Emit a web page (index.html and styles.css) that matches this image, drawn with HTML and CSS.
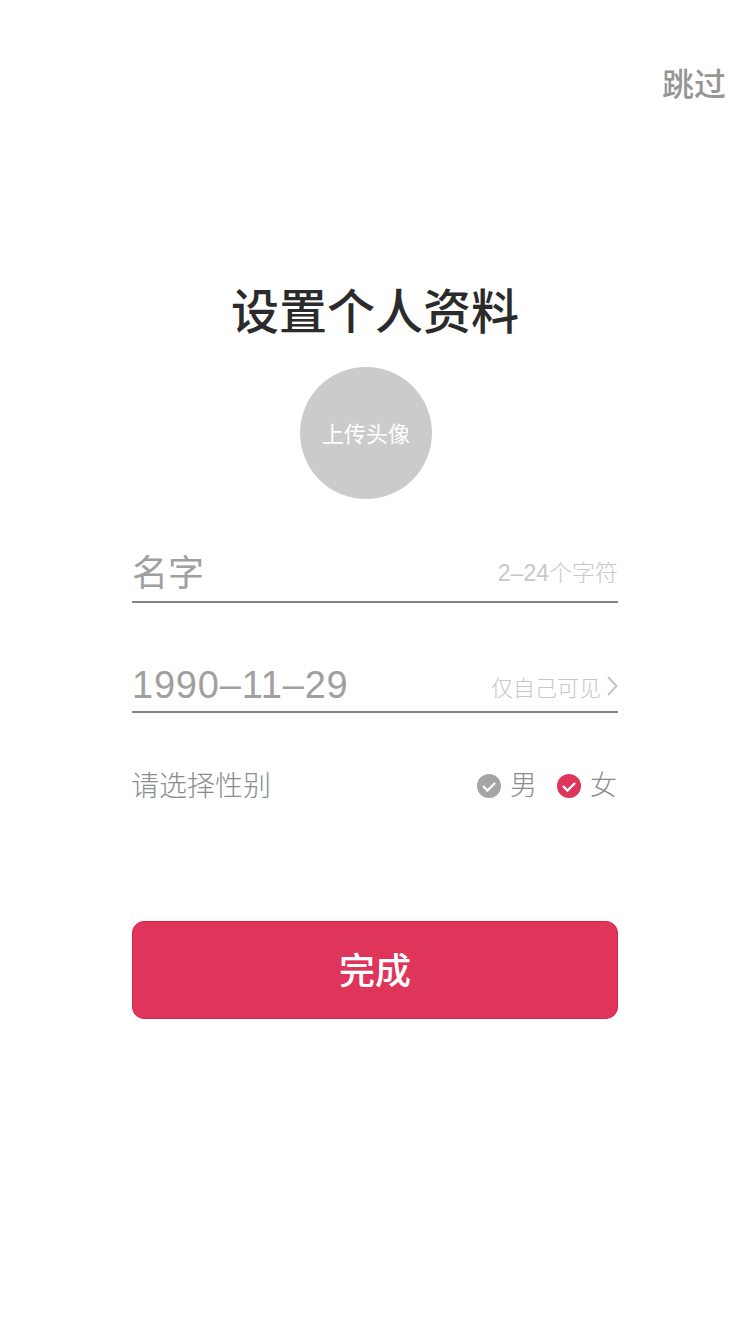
FILE: index.html
```html
<!DOCTYPE html>
<html lang="zh-CN">
<head>
  <meta charset="UTF-8">
  <meta name="viewport" content="width=device-width, initial-scale=1.0">
  <title>设置个人资料</title>
  <link rel="stylesheet" href="styles.css">
</head>
<body>

<div class="topbar">
  <a class="skip">跳过</a>
</div>

<div class="profile-form">
  <h1>设置个人资料</h1>

  <div class="avatar-row">
    <div class="avatar">上传头像</div>
  </div>

  <div class="field field-name">
    <span class="field-value">名字</span>
    <span class="field-hint">2–24个字符</span>
  </div>

  <div class="field field-date">
    <span class="field-value">1990–11–29</span>
    <span class="field-hint">仅自己可见
      <svg class="chevron" width="11" height="22" viewBox="0 0 11 22"><path d="M1 2 L9.5 11 L1 20" fill="none" stroke="#c4c4c4" stroke-width="2"/></svg>
    </span>
  </div>

  <div class="gender-row">
    <span class="gender-label">请选择性别</span>
    <div class="gender-options">
      <span class="gender-option">
        <svg width="24" height="24" viewBox="0 0 24 24"><circle cx="12" cy="12" r="12" fill="#a5a5a5"/><path d="M6 12 L10.5 16.5 L18 9" fill="none" stroke="#fff" stroke-width="2.4"/></svg>
        <span class="gender-text">男</span>
      </span>
      <span class="gender-option">
        <svg width="24" height="24" viewBox="0 0 24 24"><circle cx="12" cy="12" r="12" fill="#e0355b"/><path d="M6 12 L10.5 16.5 L18 9" fill="none" stroke="#fff" stroke-width="2.4"/></svg>
        <span class="gender-text">女</span>
      </span>
    </div>
  </div>

  <button class="done-btn">完成</button>
</div>

</body>
</html>
```
FILE: styles.css
```css
body {
  font-family: "Liberation Sans", "Noto Sans CJK SC", sans-serif;
  background-color: #fff;
  margin: 0;
  padding: 0;
  height: 1334px;
  overflow: hidden;
}

.topbar {
  display: flex;
  justify-content: flex-end;
  padding: 66px 24px 0 0;
  height: 38px;
}

.skip {
  font-size: 32px;
  line-height: 38px;
  color: #969696;
  font-weight: 500;
}

.profile-form {
  width: 486px;
  margin: 0 0 0 132px;
  padding-top: 178px;
}

h1 {
  margin: 0;
  width: 486px;
  text-align: center;
  font-size: 48px;
  line-height: 62px;
  font-weight: 500;
  color: #2b2b2b;
}

.avatar-row {
  display: flex;
  margin-top: 23px;
  padding-left: 168px;
}

.avatar {
  width: 132px;
  height: 132px;
  border-radius: 50%;
  background-color: #cbcbcb;
  color: #fff;
  font-size: 22px;
  padding-bottom: 3px;
  box-sizing: border-box;
  display: flex;
  align-items: center;
  justify-content: center;
}

.field {
  display: flex;
  justify-content: space-between;
  box-sizing: border-box;
  border-bottom: 2px solid #858585;
  height: 56px;
}

.field-name {
  margin-top: 48px;
  align-items: flex-start;
}

.field-date {
  margin-top: 54px;
  align-items: center;
}

.field-value {
  font-size: 36px;
  line-height: 36px;
  color: #a0a0a0;
}

.field-name .field-value {
  padding-top: 9px;
}

.field-date .field-value {
  font-size: 38px;
  letter-spacing: 0.8px;
  padding-top: 2px;
}

.field-hint {
  font-size: 23px;
  font-weight: 300;
  color: #c8c8c8;
  display: flex;
  align-items: center;
  gap: 6px;
}

.field-name .field-hint {
  padding-top: 7px;
}

.field-date .field-hint {
  font-size: 22px;
  padding-top: 4px;
}

.gender-row {
  display: flex;
  justify-content: space-between;
  align-items: center;
  margin-top: 53px;
  height: 40px;
}

.gender-label {
  font-size: 28px;
  font-weight: 300;
  color: #8c8c8c;
  padding-bottom: 5px;
  margin-left: -1px;
}

.gender-options {
  display: flex;
  gap: 20px;
  padding-right: 1px;
}

.gender-option {
  display: flex;
  align-items: center;
  gap: 9px;
}

.gender-text {
  font-size: 27px;
  font-weight: 300;
  color: #8c8c8c;
  padding-bottom: 6px;
}

.done-btn {
  display: block;
  width: 486px;
  height: 98px;
  margin-top: 115px;
  padding: 0 0 4px;
  background-color: #e0355b;
  border: 1px solid #dd1f4c;
  border-radius: 12px;
  color: #fff;
  font-family: inherit;
  font-size: 36px;
  font-weight: 500;
}
```
